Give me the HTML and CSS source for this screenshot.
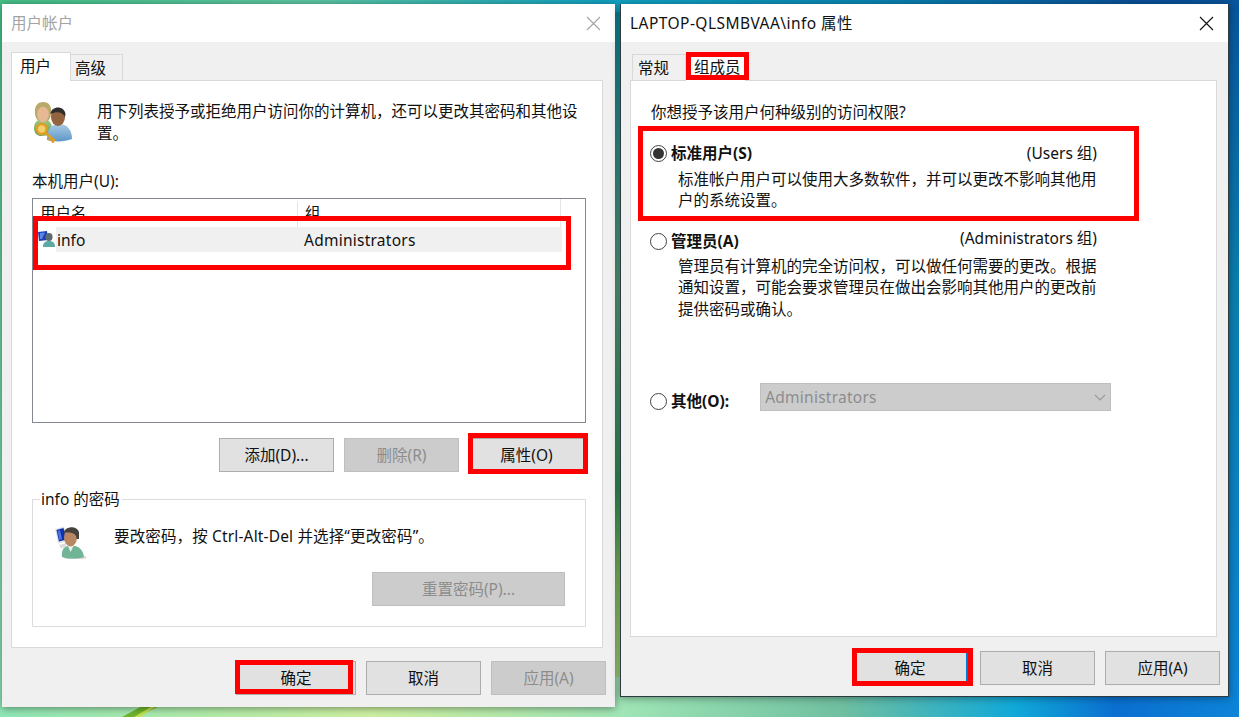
FILE: index.html
```html
<!DOCTYPE html>
<html lang="zh-CN">
<head>
  <meta charset="UTF-8" />
  <title>用户帐户</title>
  <link rel="stylesheet" href="styles.css">
</head>
<body>
  <!-- wallpaper leaf -->
  <svg class="leaf" width="60" height="12" viewBox="0 0 60 12"><path d="M0 12 L22 0 L40 0 L14 12 Z" fill="#6fb52c"/><path d="M12 12 L32 0 L36 0 L18 12 Z" fill="#c6e04e"/></svg>

  <!-- User accounts dialog -->
  <section class="dialog dialog-users">
    <header class="titlebar is-inactive">
      <span>用户帐户</span>
      <svg class="close" width="15" height="15" viewBox="0 0 15 15"><path d="M1 1 L14 14 M14 1 L1 14" stroke="#a3a3a3" stroke-width="1.1"/></svg>
    </header>
    <div class="dialog-body">
      <div class="tabs">
        <div class="tab tab-active">用户</div>
        <div class="tab tab-high">高级</div>
      </div>
      <div class="panel panel-users">
        <div class="intro">
          <svg class="intro-icon" width="42" height="42" viewBox="0 0 42 42">
            <defs>
              <linearGradient id="shirtBlue" x1="0" y1="0" x2="0" y2="1"><stop offset="0" stop-color="#a9cbe6"/><stop offset="1" stop-color="#5f97c6"/></linearGradient>
              <linearGradient id="shirtGreen" x1="0" y1="0" x2="0" y2="1"><stop offset="0" stop-color="#a6cb86"/><stop offset="1" stop-color="#5d9a55"/></linearGradient>
            </defs>
            <path d="M2 27 C2 21 6 18 11 18 C16 18 20 21 20 28 L18 34 L8 35 C4 34 2 31 2 27 Z" fill="url(#shirtGreen)"/>
            <path d="M3 12 C2 4 7 1 11 1 C16 1 20 4 19 12 C19 17 17 21 11 21 C6 21 3 17 3 12 Z" fill="#b9aa6a"/>
            <ellipse cx="11" cy="13.5" rx="5.8" ry="7.8" fill="#e6b994"/>
            <path d="M15 39 C15 28 19 23 27 23 C35 23 40 29 40 38 C33 41 22 41 15 39 Z" fill="url(#shirtBlue)"/>
            <ellipse cx="26" cy="16" rx="7" ry="9" fill="#93623f"/>
            <path d="M18.5 13 C19 5 32 4 33.5 13 L33 16 C31 11 25 10 18.5 13 Z" fill="#2f2e2d"/>
            <circle cx="9.7" cy="28" r="5" fill="#f1cf6b" stroke="#dd9f26" stroke-width="2.6"/>
            <path d="M13 31.5 L23 40 M19 36.5 L17 39.5 M22 39 L20 41.5" stroke="#dd9f26" stroke-width="2.6" fill="none"/>
          </svg>
          <p class="intro-text">用下列表授予或拒绝用户访问你的计算机，还可以更改其密码和其他设置。</p>
        </div>
        <div class="list-label">本机用户(U):</div>
        <div class="list">
          <div class="list-head">
            <span class="col-name">用户名</span>
            <span class="col-group">组</span>
          </div>
          <div class="list-row">
            <svg class="row-icon" width="18" height="17" viewBox="0 0 18 17">
              <path d="M0 1 L9 0 L10 9 L1 10 Z" fill="#1c3fb5"/>
              <path d="M2 2 L7 1.5 L4 8 L2 8 Z" fill="#5d86e6"/>
              <ellipse cx="11" cy="6" rx="3.6" ry="4" fill="#5f6a6a"/>
              <path d="M5 16 C5 11 8 10 11 10 C15 10 17 12 17 16 Z" fill="#5aa9a3"/>
            </svg>
            <span class="row-sel">
              <span class="col-name">info</span>
              <span class="col-group">Administrators</span>
            </span>
          </div>
        </div>
        <div class="list-actions">
          <button class="btn">添加(D)...</button>
          <button class="btn is-disabled">删除(R)</button>
          <button class="btn">属性(O)</button>
        </div>
        <div class="group">
          <span class="group-title">info 的密码</span>
          <div class="group-line">
            <svg class="group-icon" width="36" height="34" viewBox="0 0 36 34">
              <path d="M2 4 L11 1.5 L15 16 L5 18.5 Z" fill="#dfe4ea"/>
              <path d="M3.5 5 L10.5 3 L13.5 14.5 L6 16.5 Z" fill="#0f2fb0"/>
              <path d="M4.5 6 L7 5.3 L9 14 L6.5 15 Z" fill="#4a78e0"/>
              <path d="M6 20 L13 18 L13 22 L8 23.5 Z" fill="#d9dcdf"/>
              <path d="M34 33 C28 35 16 35 10 33 L32 31 Z" fill="#d8d8d8"/>
              <path d="M9 32 C8 24 12 20.5 18 20.5 C26 20.5 30 25 31 32 C25 34 15 34 9 32 Z" fill="#71b596"/>
              <path d="M15 21 L17.5 27 L20.5 21 Z" fill="#eef3ef"/>
              <ellipse cx="17.5" cy="12.5" rx="6.5" ry="9" fill="#b98862"/>
              <path d="M10.5 8 C12 1 24 0 26 7 L26 14 L23.5 14 C24 9 19 6.5 10.5 8 Z" fill="#45413d"/>
            </svg>
            <span class="group-text">要改密码，按 Ctrl-Alt-Del 并选择“更改密码”。</span>
          </div>
          <div class="group-actions">
            <button class="btn btn-reset is-disabled">重置密码(P)...</button>
          </div>
        </div>
      </div>
      <footer class="dialog-foot">
        <button class="btn btn-ok">确定</button>
        <button class="btn">取消</button>
        <button class="btn is-disabled">应用(A)</button>
      </footer>
    </div>
  </section>

  <!-- Properties dialog -->
  <section class="dialog dialog-props">
    <header class="titlebar">
      <span class="title-wide">LAPTOP-QLSMBVAA\info 属性</span>
      <svg class="close" width="15" height="15" viewBox="0 0 15 15"><path d="M1 1 L14 14 M14 1 L1 14" stroke="#111" stroke-width="1.1"/></svg>
    </header>
    <div class="dialog-body">
      <div class="tabs tabs-props">
        <div class="tab tab-high tab-general">常规</div>
        <div class="tab tab-active tab-members">组成员</div>
      </div>
      <div class="panel panel-props">
        <p class="question">你想授予该用户何种级别的访问权限?</p>
        <div class="option option-std">
          <span class="radio is-checked"></span>
          <span class="option-label">标准用户(S)</span>
          <span class="option-note">(Users 组)</span>
        </div>
        <p class="option-desc">标准帐户用户可以使用大多数软件，并可以更改不影响其他用户的系统设置。</p>
        <div class="option option-admin">
          <span class="radio"></span>
          <span class="option-label">管理员(A)</span>
          <span class="option-note">(Administrators 组)</span>
        </div>
        <p class="option-desc desc-admin">管理员有计算机的完全访问权，可以做任何需要的更改。根据通知设置，可能会要求管理员在做出会影响其他用户的更改前提供密码或确认。</p>
        <div class="other">
          <span class="radio"></span>
          <span class="option-label">其他(O):</span>
          <div class="select">
            <span class="select-value">Administrators</span>
            <svg width="12" height="7" viewBox="0 0 12 7"><path d="M1 1 L6 6 L11 1" fill="none" stroke="#9a9a9a" stroke-width="1.2"/></svg>
          </div>
        </div>
      </div>
      <footer class="dialog-foot foot-props">
        <button class="btn btn-focus">确定</button>
        <button class="btn">取消</button>
        <button class="btn">应用(A)</button>
      </footer>
    </div>
  </section>

  <!-- Red annotation frames -->
  <div class="mark mark-row"></div>
  <div class="mark mark-prop"></div>
  <div class="mark mark-ok-left"></div>
  <div class="mark mark-tab"></div>
  <div class="mark mark-std"></div>
  <div class="mark mark-ok-right"></div>
</body>
</html>
```

FILE: styles.css
```css
/* ---------- Global ---------- */
* {
  box-sizing: border-box;
  margin: 0;
  padding: 0;
}
html, body {
  height: 100%;
  overflow: hidden;
}
body {
  position: relative;
  font-family: "Noto Sans", "Noto Sans CJK SC", sans-serif;
  font-size: 15.5px;
  line-height: 22px;
  color: #111;
  background:
    linear-gradient(90deg, #47c38a 0, #5fcaa5 25%, #12a4c4 49%, #0a86b2 70%, #0a4f97 92%, #07559c 100%) top / 100% 12px no-repeat,
    linear-gradient(90deg, #8fe6b5 0, #cdf0a0 30%, #9fe5b5 50%, #6fbfa0 68%, #10a8d8 82%, #0a6fd0 90%, #0c84d8 100%) bottom / 100% 40px no-repeat,
    linear-gradient(180deg, #47c38a, #8fe6b5) left / 4px 100% no-repeat,
    linear-gradient(180deg, #07559c, #0a7fae 40%, #0c84d8) right / 20px 100% no-repeat,
    linear-gradient(180deg, #0a8a9f, #5aa080 40%, #2f9358 68%, #80c060 80%, #b0e090);
}
.leaf {
  position: absolute;
  left: 122px;
  top: 705px;
}

/* ---------- Dialog windows ---------- */
.dialog {
  position: absolute;
  display: flex;
  flex-direction: column;
  background-color: #f0f0f0;
}
.dialog-users {
  left: 2px;
  top: 4px;
  width: 613px;
  height: 703px;
  box-shadow: 0 1px 8px rgba(0, 0, 0, 0.45);
}
.dialog-props {
  left: 620px;
  top: 4px;
  width: 609px;
  height: 693px;
  border: 1px solid #2d3a3f;
  border-top: 0;
  box-shadow: 0 1px 8px rgba(0, 0, 0, 0.4);
}
.titlebar {
  display: flex;
  align-items: center;
  justify-content: space-between;
  flex: none;
  height: 38px;
  padding: 0 14px 0 9px;
  background-color: #fff;
  font-size: 15.5px;
}
.titlebar.is-inactive {
  color: #a3a3a3;
}
.title-wide {
  letter-spacing: 0.45px;
}
.dialog-body {
  display: flex;
  flex-direction: column;
  flex: 1;
  padding: 10px 12px 0 9px;
}
.dialog-props .dialog-body {
  padding-right: 11px;
}

/* ---------- Tabs ---------- */
.tabs {
  display: flex;
  align-items: flex-end;
  height: 28px;
  position: relative;
  z-index: 1;
}
.tab {
  border: 1px solid #d9d9d9;
}
.tab-active {
  width: 60px;
  height: 29px;
  margin-bottom: -1px;
  padding: 2px 0 0 8px;
  background-color: #fff;
  border-bottom: 0;
}
.tab-high {
  width: 52px;
  height: 26px;
  padding: 2px 0 0 4px;
  background-color: #f0f0f0;
  border-left: 0;
  border-bottom: 0;
}
.tabs-props {
  padding-left: 2px;
}
.tab-general {
  width: 54px;
  padding-left: 5px;
  border-left: 1px solid #d9d9d9;
}
.tab-members {
  width: 60px;
  padding-top: 3px;
  border-left: 0;
}
.panel {
  background-color: #fff;
  border: 1px solid #d9d9d9;
}
.panel-users {
  height: 568px;
  padding: 19px 16px 0 20px;
}
.panel-props {
  height: 557px;
  padding: 20px 20px 0 20px;
}

/* ---------- Users panel ---------- */
.intro {
  display: flex;
  height: 44px;
}
.intro-icon {
  flex: none;
  margin-top: 1px;
}
.intro-text {
  width: 490px;
  margin-left: 23px;
}
.list-label {
  margin-top: 26px;
}
.list {
  height: 225px;
  margin-top: 6px;
  background-color: #fff;
  border: 1px solid #828790;
}
.list-head {
  display: flex;
  height: 28px;
  padding-top: 3px;
  width: 528px;
  border-right: 1px solid #e5e5e5;
}
.col-name {
  width: 264px;
  padding-left: 7px;
  flex: none;
}
.list-head .col-group {
  padding-left: 7px;
  border-left: 1px solid #e5e5e5;
  flex: 1;
}
.list-row {
  display: flex;
  align-items: center;
  height: 25px;
}
.row-icon {
  flex: none;
  margin-left: 5px;
}
.row-sel {
  display: flex;
  align-items: center;
  width: 506px;
  height: 25px;
  background-color: #f0f0f0;
}
.row-sel .col-name {
  width: 248px;
  padding-left: 1px;
}
.row-sel .col-group {
  letter-spacing: 0.25px;
}
.list-actions {
  display: flex;
  gap: 10px;
  justify-content: flex-end;
  margin-top: 15px;
  padding-right: 2px;
}
.group {
  position: relative;
  height: 128px;
  margin-top: 27px;
  padding: 25px 20px 0 20px;
  border: 1px solid #dcdcdc;
}
.group-title {
  position: absolute;
  left: 7px;
  top: -12px;
  padding: 0 2px 0 1px;
  background-color: #fff;
}
.group-line {
  display: flex;
  align-items: flex-start;
  height: 47px;
}
.group-text {
  margin-left: 25px;
  letter-spacing: 0.15px;
}
.group-actions {
  display: flex;
  justify-content: flex-end;
}

/* ---------- Buttons ---------- */
.btn {
  width: 115px;
  height: 34px;
  font: inherit;
  color: #111;
  background-color: #e1e1e1;
  border: 1px solid #adadad;
}
.btn.is-disabled {
  color: #8c8c8c;
  background-color: #cccccc;
  border-color: #bfbfbf;
}
.btn-reset {
  width: 193px;
}
.dialog-foot {
  display: flex;
  gap: 10px;
  justify-content: flex-end;
  margin-top: 13px;
  margin-right: -3px;
}
.btn-ok {
  width: 120px;
}
.foot-props {
  margin-top: 14px;
}
.btn-focus {
  width: 116px;
  margin-right: 2px;
  border: 2px solid #0078d7;
}

/* ---------- Properties panel ---------- */
.question {
  height: 22px;
}
.option {
  display: flex;
  align-items: center;
  justify-content: space-between;
  height: 22px;
  padding-right: 99px;
}
.option-std {
  margin-top: 19px;
}
.option-admin {
  margin-top: 18.5px;
}
.option-admin .option-note {
  margin-top: -6px;
}
.option-label {
  margin-left: 4px;
  margin-right: auto;
  font-weight: 700;
}
.radio {
  flex: none;
  position: relative;
  width: 17px;
  height: 17px;
  margin-left: -1px;
  background-color: #fff;
  border: 1px solid #444;
  border-radius: 50%;
}
.radio.is-checked::after {
  content: "";
  position: absolute;
  left: 2px;
  top: 2px;
  width: 11px;
  height: 11px;
  background-color: #333;
  border-radius: 50%;
}
.option-desc {
  width: 432px;
  margin-top: 4.5px;
  margin-left: 27px;
  line-height: 21.5px;
}
.desc-admin {
  margin-top: 3.5px;
}
.other {
  display: flex;
  align-items: flex-start;
  margin-top: 63px;
}
.other .radio {
  margin-top: 10px;
}
.other .option-label {
  margin-top: 7px;
  margin-right: 0;
}
.select {
  display: flex;
  align-items: center;
  justify-content: space-between;
  flex: none;
  width: 351px;
  height: 28px;
  margin-left: 31px;
  padding: 0 4px 0 4px;
  color: #8c8c8c;
  background-color: #cccccc;
  border: 1px solid #bfbfbf;
}
.select-value {
  letter-spacing: 0.25px;
}

/* ---------- Red annotation frames ---------- */
.mark {
  position: absolute;
  z-index: 5;
  border: 5px solid #ff0000;
}
.mark-row {
  left: 33px;
  top: 216px;
  width: 538px;
  height: 54px;
}
.mark-prop {
  left: 468px;
  top: 433px;
  width: 120px;
  height: 41px;
}
.mark-ok-left {
  left: 235px;
  top: 660px;
  width: 118px;
  height: 34px;
}
.mark-tab {
  left: 686px;
  top: 52px;
  width: 63px;
  height: 28px;
}
.mark-std {
  left: 638px;
  top: 126px;
  width: 501px;
  height: 95px;
}
.mark-ok-right {
  left: 852px;
  top: 648px;
  width: 121px;
  height: 38px;
}
```
